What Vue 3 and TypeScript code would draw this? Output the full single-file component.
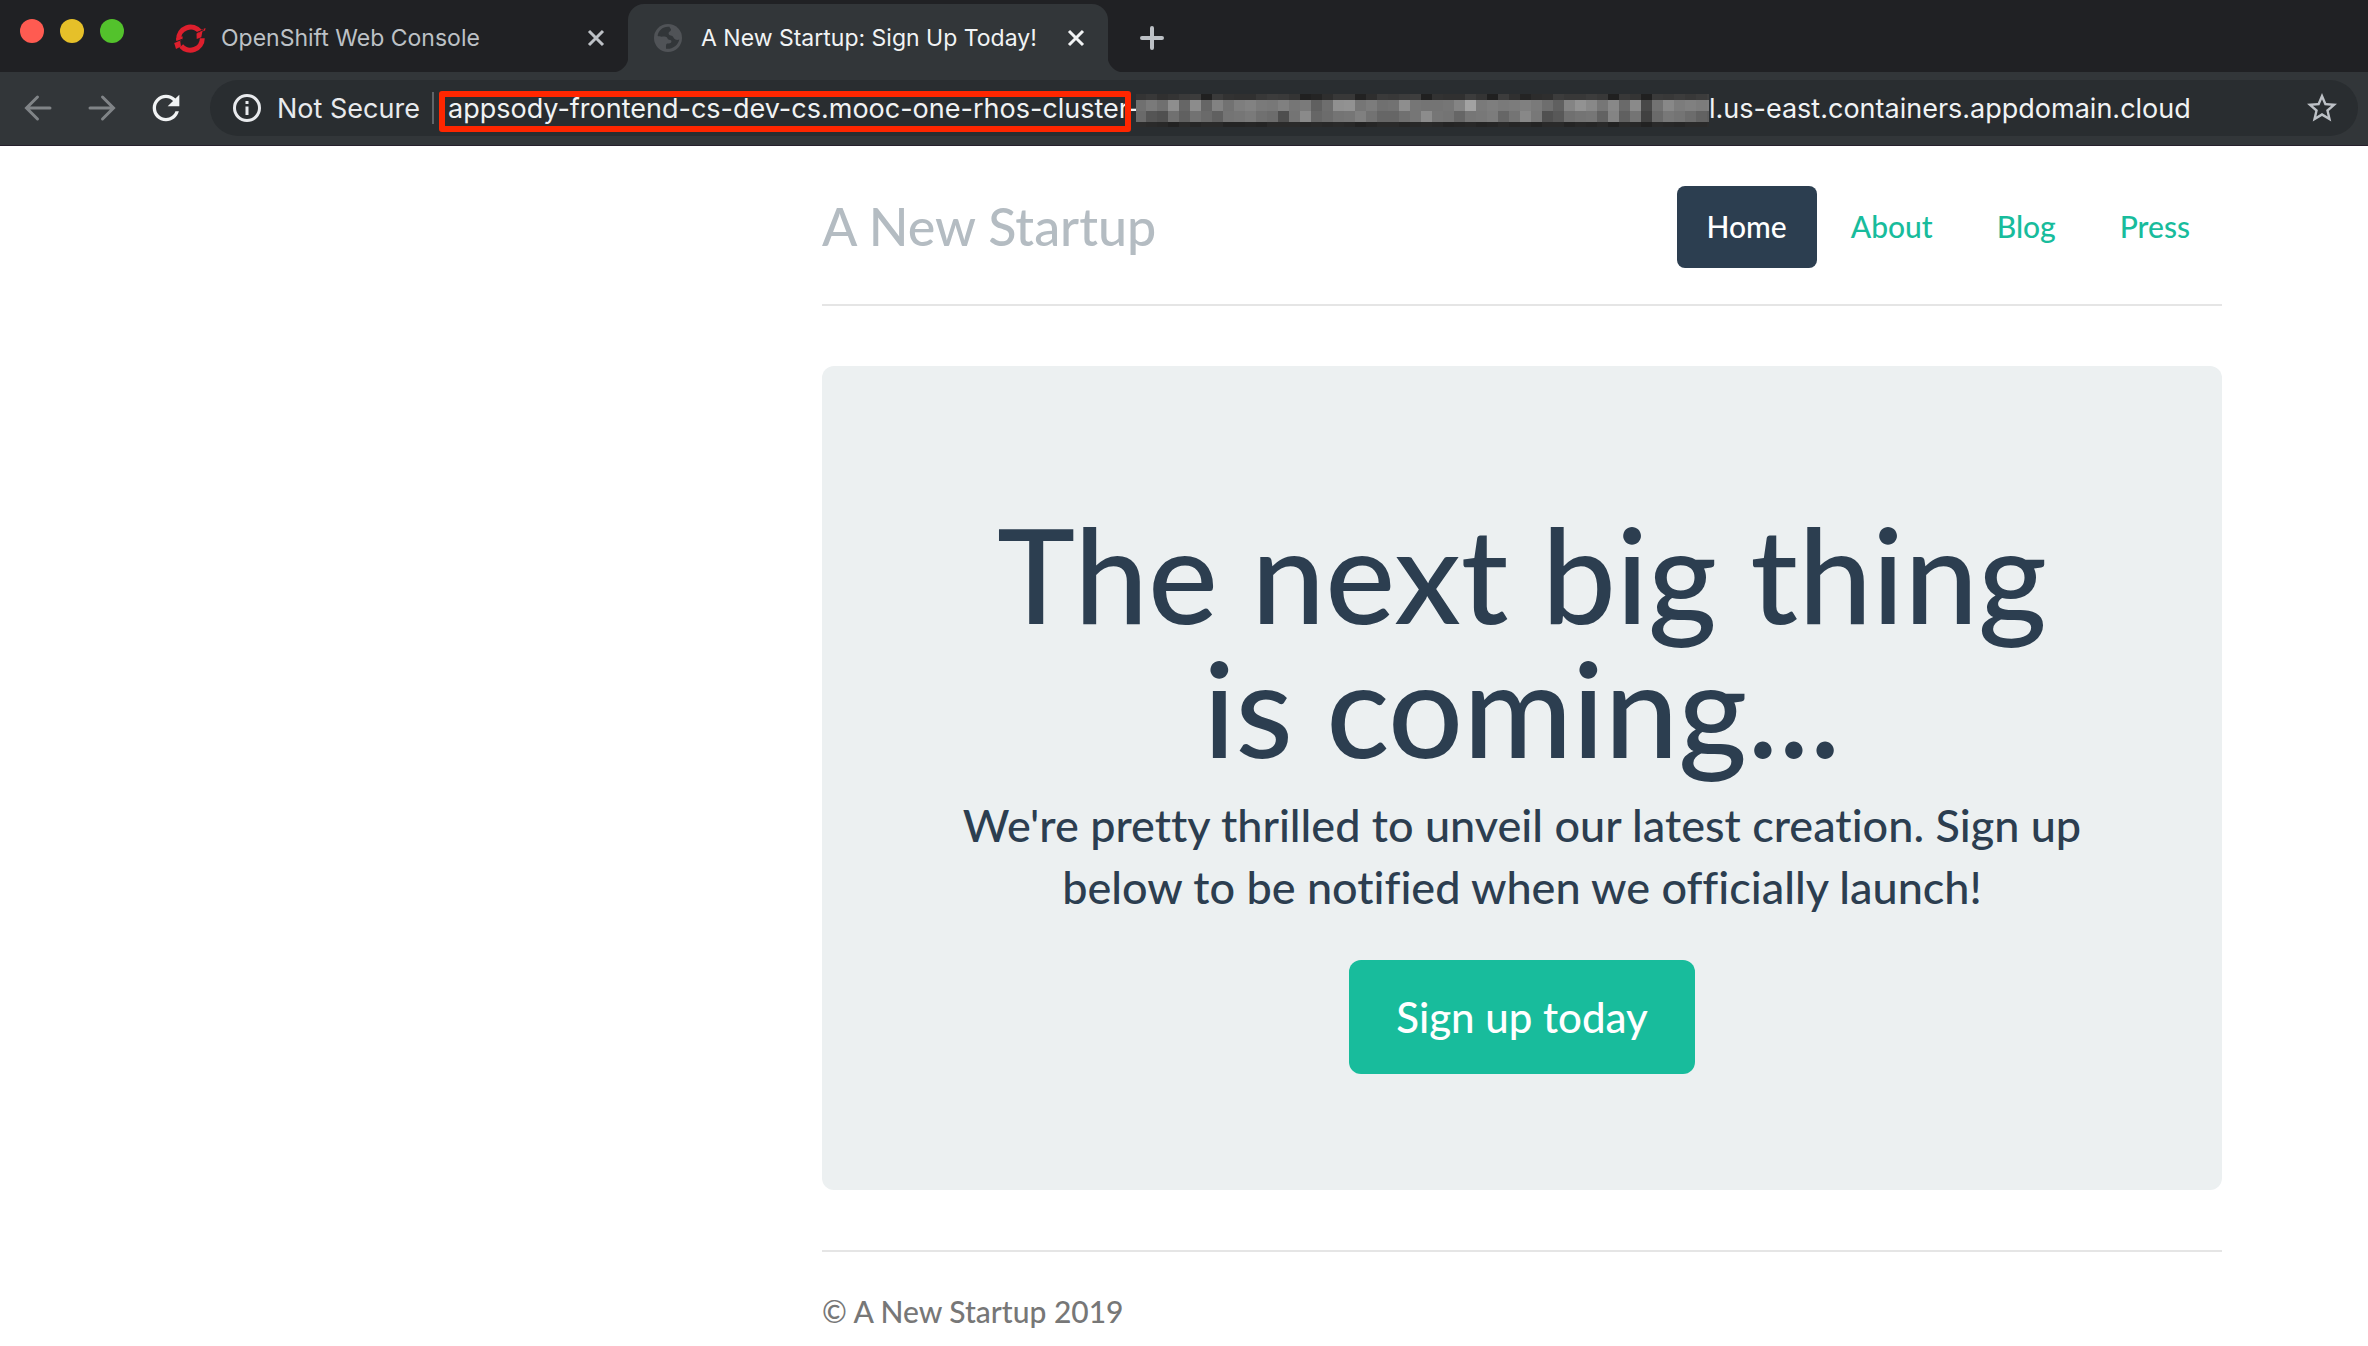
<script setup lang="ts">
interface NavItem {
  label: string
  active: boolean
}

const navItems: NavItem[] = [
  { label: 'Home', active: true },
  { label: 'About', active: false },
  { label: 'Blog', active: false },
  { label: 'Press', active: false },
]

// Grey levels of the redaction mosaic, one hex pair per cell and row.
const mosaicRows: { y: number; h: number; cells: string[] }[] = [
  {
    y: 0,
    h: 6,
    cells: '34 38 30 34 3a 3c 20 3a 32 30 30 38 3c 3a 34 20 24 2e 38 38 22 2e 3a 38 3c 3e 20 32 30 30 3c 34 20 3c 30 24 2c 2e 3c 38 38 3c 38 20 38 34 20 3a 38 3c 38 3c 40'.split(' '),
  },
  {
    y: 6,
    h: 11,
    cells: '70 7a 70 8e 66 8c 66 82 72 7e 82 7a 78 80 76 7a 60 6e 90 92 76 7c 70 72 8e 76 74 74 76 84 a2 7a 7e 7a 7c 80 7a 6e 60 84 92 88 76 88 6a 8a 48 72 88 7c 80 7c 7e'.split(' '),
  },
  {
    y: 17,
    h: 11,
    cells: '6a 55 50 70 60 72 6a 60 74 76 7a 70 6c 4e 74 8a 66 6c 74 76 80 72 66 66 70 76 8c 76 74 66 76 78 7c 66 74 88 78 50 58 70 74 76 62 84 60 74 40 6a 78 74 6c 62 5e'.split(' '),
  },
  {
    y: 28,
    h: 5,
    cells: '2c 2a 28 22 2a 26 2a 2a 24 24 26 24 2a 2a 2a 28 2a 28 2a 28 22 26 2a 2a 26 28 2a 28 24 26 28 24 26 2a 26 28 24 2a 2a 24 28 26 2a 22 2a 28 22 2a 28 26 2a 2a 2c'.split(' '),
  },
]

const shade = (level: string): string => `#${level}${level}${level}`
</script>

<template>
  <div class="window">
    <header class="chrome">
      <div class="tab-strip">
        <div class="lights">
          <button class="light close" type="button" aria-label="Close window"></button>
          <button class="light minimise" type="button" aria-label="Minimise window"></button>
          <button class="light zoom" type="button" aria-label="Zoom window"></button>
        </div>

        <div class="tab">
          <svg class="favicon" viewBox="0 0 30 30" aria-hidden="true">
            <g fill="none" stroke="#dd1f2d" stroke-width="5">
              <path d="M4.6 16.5A12 12 0 0 1 26 8.6" />
              <path d="M28.3 15.2A12 12 0 0 1 7.2 23" />
            </g>
            <path d="M2 15.5l6.500-2.200.3 3.200-6.300 2.700z M.2 20l6-2.200.8 5.800-5 2.400z M22.500 10.500l6-2.400-1.200 6.200-4.600 1.800z M25 8l6.500-3-.4 2.600-5.100 1.900z" fill="#dd1f2d" />
            <path d="M1.800 18.800l7.500-2.900M22.500 9.600l7.500-3" stroke="#202124" stroke-width="1" />
          </svg>
          <span class="tab-title">OpenShift Web Console</span>
          <button class="tab-close" type="button" aria-label="Close tab">
            <svg width="18" height="18" viewBox="0 0 18 18" aria-hidden="true">
              <path d="M2 2l14 14M16 2L2 16" />
            </svg>
          </button>
        </div>

        <div class="tab active">
          <svg class="favicon" viewBox="0 0 30 30" aria-hidden="true">
            <circle cx="14" cy="15" r="14" fill="#505357" />
            <path d="M15.500 3.800C9 3 4.500 7.500 3.600 12.800c1.800 1.300 5.200.6 8 .9 2.100.3 1.600 2.800 3.500 3 1.600.1 2.500.4 2.300 2-.2 1.700-2.200 1.500-4.200 1.800-1.300.2-1.200 2.200-1.200 5.200 6.200.8 12-3.300 13.300-9.300-1.500.8-4 .7-5.200-.8-1.300-1.700-.9-2.600-3.200-3-1.500-.3-2.500-.8-2.300-2.500.2-1.600 2.400-1.500 2.400-3.300 0-1.400-1.300-1.300-1.500-3z" fill="#323639" />
          </svg>
          <span class="tab-title">A New Startup: Sign Up Today!</span>
          <button class="tab-close" type="button" aria-label="Close tab">
            <svg width="18" height="18" viewBox="0 0 18 18" aria-hidden="true">
              <path d="M2 2l14 14M16 2L2 16" />
            </svg>
          </button>
        </div>

        <button class="new-tab" type="button" aria-label="New tab">
          <svg width="24" height="24" viewBox="0 0 24 24" aria-hidden="true">
            <path d="M12 2v20M2 12h20" />
          </svg>
        </button>
      </div>

      <div class="toolbar">
        <button class="tool dim" type="button" aria-label="Back">
          <svg width="28" height="28" viewBox="0 0 28 28" aria-hidden="true">
            <path d="M13.500 3L2.500 14l11 11M3 14h23" />
          </svg>
        </button>
        <button class="tool dim" type="button" aria-label="Forward">
          <svg width="28" height="28" viewBox="0 0 28 28" aria-hidden="true">
            <path d="M14.500 3l11 11-11 11M25 14H2" />
          </svg>
        </button>
        <button class="tool reload" type="button" aria-label="Reload">
          <svg width="40" height="40" viewBox="0 0 24 24" aria-hidden="true">
            <path d="M17.65 6.35C16.2 4.9 14.21 4 12 4c-4.42 0-7.99 3.58-7.99 8s3.57 8 7.99 8c3.73 0 6.84-2.55 7.73-6h-2.08c-.82 2.33-3.04 4-5.65 4-3.31 0-6-2.69-6-6s2.69-6 6-6c1.66 0 3.14.69 4.22 1.780L13 11h7V4l-2.350 2.350z" />
          </svg>
        </button>

        <div class="omnibox">
          <button class="security" type="button">
            <svg width="28" height="28" viewBox="0 0 28 28" aria-hidden="true">
              <circle cx="14" cy="14" r="12.500" fill="none" stroke="#e8eaed" stroke-width="3" />
              <path d="M12.500 7h3v3h-3zM12.500 12.500h3V21h-3z" fill="#e8eaed" />
            </svg>
            <span>Not Secure</span>
          </button>
          <span class="divider"></span>
          <div class="host">
            <input
              class="url"
              type="text"
              aria-label="Address, first part"
              value="appsody-frontend-cs-dev-cs.mooc-one-rhos-cluster-"
            />
            <span class="marker"></span>
          </div>
          <svg class="mosaic" width="573" height="33" viewBox="0 0 573 33" shape-rendering="crispEdges" aria-hidden="true">
            <g v-for="row in mosaicRows" :key="row.y">
              <rect
                v-for="(level, i) in row.cells"
                :key="i"
                :x="i * 11 - 1"
                :y="row.y"
                width="11"
                :height="row.h"
                :fill="shade(level)"
              />
            </g>
          </svg>
          <input
            class="url rest"
            type="text"
            aria-label="Address, last part"
            value="l.us-east.containers.appdomain.cloud"
          />
          <button class="star" type="button" aria-label="Bookmark this page">
            <svg width="36" height="36" viewBox="0 0 24 24" aria-hidden="true">
              <path d="M22 9.240l-7.190-.62L12 2 9.190 8.630 2 9.240l5.460 4.730L5.820 21 12 17.270 18.180 21l-1.630-7.030L22 9.240zM12 15.400l-3.760 2.270 1-4.280-3.320-2.880 4.380-.38L12 6.100l1.710 4.040 4.380.38-3.320 2.880 1 4.280L12 15.400z" />
            </svg>
          </button>
        </div>
      </div>
    </header>

    <div class="page">
      <div class="container">
        <div class="header">
          <h3 class="brand">A New Startup</h3>
          <nav class="nav">
            <a
              v-for="item in navItems"
              :key="item.label"
              href="#"
              class="nav-link"
              :class="{ current: item.active }"
            >{{ item.label }}</a>
          </nav>
        </div>

        <main class="jumbotron">
          <h1>The next big thing is coming...</h1>
          <p class="lead">
            We're pretty thrilled to unveil our latest creation. Sign up below to be notified when we officially launch!
          </p>
          <button class="signup" type="button">Sign up today</button>
        </main>

        <footer class="footer">
          <p>© A New Startup 2019</p>
        </footer>
      </div>
    </div>
  </div>
</template>

<style>
body {
  margin: 0;
  background: #ffffff;
}
</style>

<style scoped>
.window {
  font-family: Lato, sans-serif;
  font-weight: 500;
  color: #2c3e50;
}

button {
  margin: 0;
  padding: 0;
  border: 0;
  background: none;
  font: inherit;
  color: inherit;
  cursor: pointer;
}

svg {
  display: block;
  flex: none;
}

/* Browser chrome */
.chrome {
  font-family: Inter, sans-serif;
  font-weight: 400;
  background: #202124;
}

.tab-strip {
  display: flex;
  padding: 4px 20px 0;
}

.lights {
  display: flex;
  align-items: center;
  gap: 16px;
  height: 54px;
  margin-right: 24px;
}

.light {
  width: 24px;
  height: 24px;
  border-radius: 50%;
}

.close {
  background: #ff5b51;
}

.minimise {
  background: #e6c029;
}

.zoom {
  background: #53c22c;
}

.tab {
  position: relative;
  display: flex;
  align-items: center;
  flex: 0 1 480px;
  box-sizing: border-box;
  height: 68px;
  padding: 0 16px 0 26px;
  border-radius: 16px 16px 0 0;
  font-size: 23px;
  line-height: 30px;
  color: #bdc1c6;
}

.tab.active {
  background: #323639;
  color: #f1f3f4;
}

/* Curved feet where the active tab meets the toolbar */
.tab.active::before,
.tab.active::after {
  content: '';
  position: absolute;
  bottom: 0;
  width: 16px;
  height: 16px;
}

.tab.active::before {
  right: 100%;
  background: radial-gradient(circle at 0 0, #202124 16px, #323639 17px);
}

.tab.active::after {
  left: 100%;
  background: radial-gradient(circle at 100% 0, #202124 16px, #323639 17px);
}

.favicon {
  width: 30px;
  height: 30px;
  margin-right: 17px;
  overflow: visible;
}

.tab-title {
  flex: 1;
  white-space: nowrap;
}

.tab-close {
  display: flex;
  align-items: center;
  justify-content: center;
  width: 32px;
  height: 32px;
}

.tab-close path {
  fill: none;
  stroke: currentColor;
  stroke-width: 3;
}

.new-tab {
  display: flex;
  align-items: center;
  justify-content: center;
  width: 48px;
  margin-left: 20px;
  color: #bdc1c6;
}

.new-tab path {
  fill: none;
  stroke: currentColor;
  stroke-width: 4;
  stroke-linecap: round;
}

.toolbar {
  display: flex;
  align-items: center;
  padding: 8px 10px 9px 6px;
  background: #323639;
  border-bottom: 1px solid #26202c;
}

.tool {
  display: flex;
  align-items: center;
  justify-content: center;
  width: 64px;
  height: 56px;
}

.dim path {
  fill: none;
  stroke: #808487;
  stroke-width: 3;
  stroke-linecap: round;
}

.reload {
  margin-right: 12px;
}

.reload path {
  fill: #f1f3f4;
}

.omnibox {
  display: flex;
  align-items: center;
  flex: 1;
  min-width: 0;
  height: 56px;
  padding: 0 18px 0 23px;
  border-radius: 28px;
  background: #292d30;
  font-size: 27px;
  color: #f1f3f4;
}

.security {
  display: flex;
  align-items: center;
  gap: 16px;
  width: 199px;
  white-space: nowrap;
  color: #e8eaed;
}

.divider {
  width: 2px;
  height: 32px;
  margin-right: 14px;
  background: #5f6368;
}

.host {
  position: relative;
  width: 688px;
}

.url {
  display: block;
  box-sizing: border-box;
  width: 100%;
  height: 40px;
  padding: 0;
  border: 0;
  outline: 0;
  background: transparent;
  font: 27px Inter, sans-serif;
  color: #f1f3f4;
}

/* Red annotation around the first part of the address */
.marker {
  position: absolute;
  top: 3px;
  left: -9px;
  box-sizing: border-box;
  width: 692px;
  height: 41px;
  border: 6px solid #ff2600;
  border-radius: 3px;
  pointer-events: none;
}

.mosaic {
  margin-top: 4px;
}

.rest {
  flex: 1;
  min-width: 0;
}

.star path {
  fill: #bdc1c6;
}

/* Web page */
.page {
  display: grid;
  grid-template-columns: 822fr 1400fr 146fr;
}

.container {
  grid-column: 2;
  min-width: 0;
  padding-top: 40px;
}

.header {
  display: flex;
  align-items: flex-start;
  justify-content: space-between;
  height: 118px;
  margin-bottom: 60px;
  border-bottom: 2px solid #e5e5e5;
}

.brand {
  margin: 0;
  font-size: 52px;
  font-weight: 500;
  line-height: 80px;
  color: #b4bcc2;
}

.nav {
  display: flex;
  gap: 4px;
  margin-right: 2px;
}

.nav-link {
  padding: 19px 30px 21px;
  border-radius: 8px;
  font-size: 30px;
  line-height: 42px;
  text-decoration: none;
  color: #18bc9c;
}

.nav-link.current {
  background: #2c3e50;
  color: #ffffff;
}

.jumbotron {
  padding: 140px 120px 116px;
  border-radius: 12px;
  background: #ecf0f1;
  text-align: center;
}

.jumbotron h1 {
  margin: 0 0 20px;
  font-size: 132px;
  font-weight: 500;
  line-height: 134px;
}

.lead {
  margin: 0 0 42px;
  font-size: 45px;
  line-height: 62px;
  font-variant-ligatures: none;
}

.signup {
  padding: 28px 47px;
  border-radius: 12px;
  background: #18bc9c;
  font-size: 42px;
  line-height: 58px;
  vertical-align: top;
  color: #ffffff;
}

.footer {
  margin-top: 60px;
  padding: 38px 0 14px;
  border-top: 2px solid #e5e5e5;
}

.footer p {
  margin: 0;
  font-size: 30px;
  line-height: 42px;
  color: #777777;
}
</style>
